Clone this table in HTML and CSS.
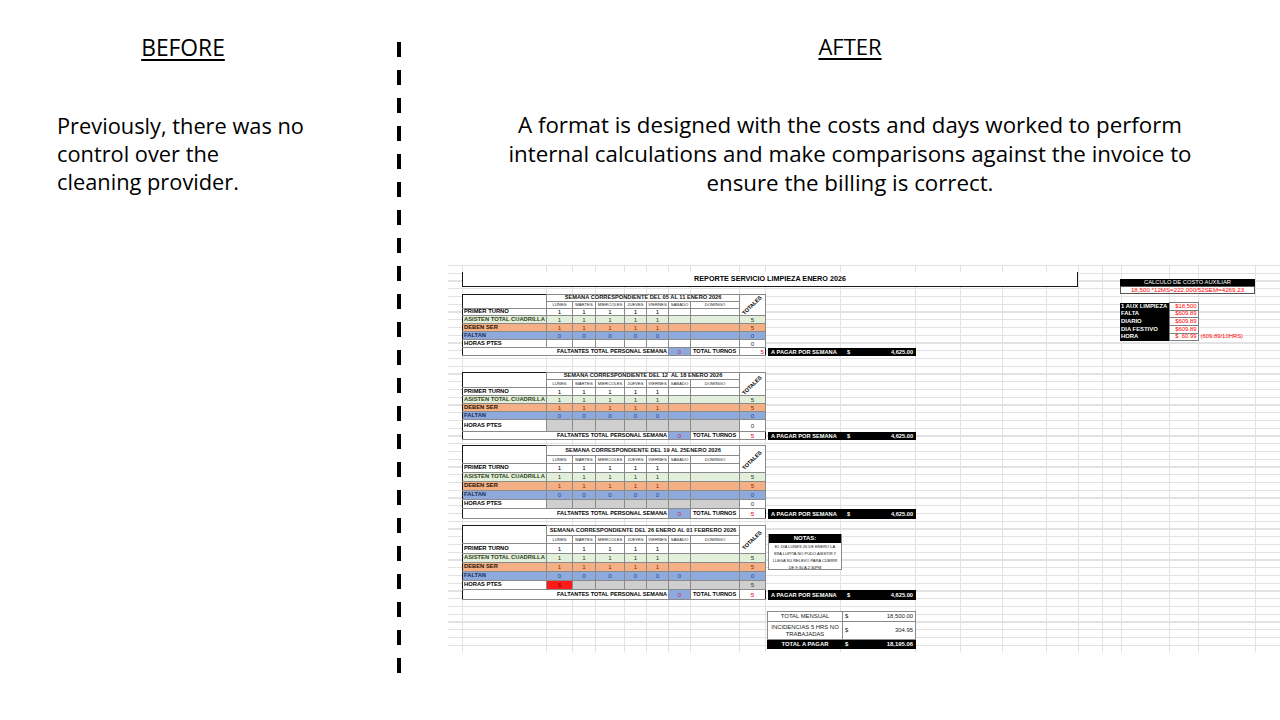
FILE: index.html
```html
<!DOCTYPE html>
<html lang="en">
<head>
<meta charset="utf-8">
<title>Before / After – Cleaning service control</title>
<link rel="stylesheet" href="styles.css">
</head>
<body>
<main class="slide">
  <section class="col-before">
    <h2 class="heading">BEFORE</h2>
    <p class="before-text">Previously, there was no<br>control over the<br>cleaning provider.</p>
  </section>
  <div class="divider"></div>
  <section class="col-after">
    <h2 class="heading">AFTER</h2>
    <p class="after-text">A format is designed with the costs and days worked to perform<br>internal calculations and make comparisons against the invoice to<br>ensure the billing is correct.</p>

    <div class="sheet">
      <div class="sheet-cols">
        <div class="sheet-main">
          <div class="report-title">REPORTE SERVICIO LIMPIEZA ENERO 2026</div>

          <!-- WEEK 1 -->
          <div class="week w1">
            <table class="wk">
              <colgroup><col class="c-lab"><col class="c-lu"><col class="c-ma"><col class="c-mi"><col class="c-ju"><col class="c-vi"><col class="c-sa"><col class="c-do"><col class="c-to"></colgroup>
              <tr class="r-head"><td rowspan="2" class="blank"></td><td colspan="7" class="wk-title">SEMANA CORRESPONDIENTE DEL 05 AL 11 ENERO 2026</td><td rowspan="3" class="tot-head"><span>TOTALES</span></td></tr>
              <tr class="r-days"><td>LUNES</td><td>MARTES</td><td>MIERCOLES</td><td>JUEVES</td><td>VIERNES</td><td>SABADO</td><td>DOMINGO</td></tr>
              <tr class="r-primer"><th>PRIMER TURNO</th><td>1</td><td>1</td><td>1</td><td>1</td><td>1</td><td></td><td></td></tr>
              <tr class="r-row r-asisten"><th>ASISTEN TOTAL CUADRILLA</th><td>1</td><td>1</td><td>1</td><td>1</td><td>1</td><td></td><td></td><td>5</td></tr>
              <tr class="r-row r-deben"><th>DEBEN SER</th><td>1</td><td>1</td><td>1</td><td>1</td><td>1</td><td></td><td></td><td>5</td></tr>
              <tr class="r-row r-faltan"><th>FALTAN</th><td>0</td><td>0</td><td>0</td><td>0</td><td>0</td><td></td><td></td><td>0</td></tr>
              <tr class="r-horas"><th>HORAS PTES</th><td></td><td></td><td></td><td></td><td></td><td></td><td></td><td class="tot-val">0</td></tr>
              <tr class="r-foot"><td colspan="6" class="foot-lab">FALTANTES TOTAL PERSONAL SEMANA</td><td class="foot-zero">0</td><td class="foot-turnos">TOTAL TURNOS</td><td class="foot-five foot-five-right">5</td></tr>
            </table>
            <div class="wk-side">
              <div class="pay"><span class="pay-lab">A PAGAR POR SEMANA</span><span>$</span><span class="pay-amt">4,625.00</span></div>
            </div>
          </div>

          <!-- WEEK 2 -->
          <div class="week w2">
            <table class="wk">
              <colgroup><col class="c-lab"><col class="c-lu"><col class="c-ma"><col class="c-mi"><col class="c-ju"><col class="c-vi"><col class="c-sa"><col class="c-do"><col class="c-to"></colgroup>
              <tr class="r-head"><td rowspan="2" class="blank"></td><td colspan="7" class="wk-title">SEMANA CORRESPONDIENTE DEL 12&nbsp; AL 18 ENERO 2026</td><td rowspan="3" class="tot-head"><span>TOTALES</span></td></tr>
              <tr class="r-days"><td>LUNES</td><td>MARTES</td><td>MIERCOLES</td><td>JUEVES</td><td>VIERNES</td><td>SABADO</td><td>DOMINGO</td></tr>
              <tr class="r-primer"><th>PRIMER TURNO</th><td>1</td><td>1</td><td>1</td><td>1</td><td>1</td><td></td><td></td></tr>
              <tr class="r-row r-asisten"><th>ASISTEN TOTAL CUADRILLA</th><td>1</td><td>1</td><td>1</td><td>1</td><td>1</td><td></td><td></td><td>5</td></tr>
              <tr class="r-row r-deben"><th>DEBEN SER</th><td>1</td><td>1</td><td>1</td><td>1</td><td>1</td><td></td><td></td><td>5</td></tr>
              <tr class="r-row r-faltan"><th>FALTAN</th><td>0</td><td>0</td><td>0</td><td>0</td><td>0</td><td></td><td></td><td>0</td></tr>
              <tr class="r-horas r-horas-gray"><th>HORAS PTES</th><td></td><td></td><td></td><td></td><td></td><td></td><td></td><td class="tot-val">0</td></tr>
              <tr class="r-foot"><td colspan="6" class="foot-lab">FALTANTES TOTAL PERSONAL SEMANA</td><td class="foot-zero">0</td><td class="foot-turnos">TOTAL TURNOS</td><td class="foot-five">5</td></tr>
            </table>
            <div class="wk-side">
              <div class="pay"><span class="pay-lab">A PAGAR POR SEMANA</span><span>$</span><span class="pay-amt">4,625.00</span></div>
            </div>
          </div>

          <!-- WEEK 3 -->
          <div class="week w3">
            <table class="wk">
              <colgroup><col class="c-lab"><col class="c-lu"><col class="c-ma"><col class="c-mi"><col class="c-ju"><col class="c-vi"><col class="c-sa"><col class="c-do"><col class="c-to"></colgroup>
              <tr class="r-head"><td rowspan="2" class="blank"></td><td colspan="7" class="wk-title">SEMANA CORRESPONDIENTE DEL 19 AL 25ENERO 2026</td><td rowspan="3" class="tot-head"><span>TOTALES</span></td></tr>
              <tr class="r-days"><td>LUNES</td><td>MARTES</td><td>MIERCOLES</td><td>JUEVES</td><td>VIERNES</td><td>SABADO</td><td>DOMINGO</td></tr>
              <tr class="r-primer"><th>PRIMER TURNO</th><td>1</td><td>1</td><td>1</td><td>1</td><td>1</td><td></td><td></td></tr>
              <tr class="r-row r-asisten"><th>ASISTEN TOTAL CUADRILLA</th><td>1</td><td>1</td><td>1</td><td>1</td><td>1</td><td></td><td></td><td>5</td></tr>
              <tr class="r-row r-deben"><th>DEBEN SER</th><td>1</td><td>1</td><td>1</td><td>1</td><td>1</td><td></td><td></td><td>5</td></tr>
              <tr class="r-row r-faltan"><th>FALTAN</th><td>0</td><td>0</td><td>0</td><td>0</td><td>0</td><td></td><td></td><td>0</td></tr>
              <tr class="r-horas r-horas-gray"><th>HORAS PTES</th><td></td><td></td><td></td><td></td><td></td><td></td><td></td><td class="tot-val">0</td></tr>
              <tr class="r-foot"><td colspan="6" class="foot-lab">FALTANTES TOTAL PERSONAL SEMANA</td><td class="foot-zero">0</td><td class="foot-turnos">TOTAL TURNOS</td><td class="foot-five">5</td></tr>
            </table>
            <div class="wk-side">
              <div class="pay"><span class="pay-lab">A PAGAR POR SEMANA</span><span>$</span><span class="pay-amt">4,625.00</span></div>
            </div>
          </div>

          <!-- WEEK 4 -->
          <div class="week w4">
            <table class="wk">
              <colgroup><col class="c-lab"><col class="c-lu"><col class="c-ma"><col class="c-mi"><col class="c-ju"><col class="c-vi"><col class="c-sa"><col class="c-do"><col class="c-to"></colgroup>
              <tr class="r-head"><td rowspan="2" class="blank"></td><td colspan="7" class="wk-title">SEMANA CORRESPONDIENTE DEL 26 ENERO AL 01 FEBRERO 2026</td><td rowspan="3" class="tot-head"><span>TOTALES</span></td></tr>
              <tr class="r-days"><td>LUNES</td><td>MARTES</td><td>MIERCOLES</td><td>JUEVES</td><td>VIERNES</td><td>SABADO</td><td>DOMINGO</td></tr>
              <tr class="r-primer"><th>PRIMER TURNO</th><td>1</td><td>1</td><td>1</td><td>1</td><td>1</td><td></td><td></td></tr>
              <tr class="r-row r-asisten"><th>ASISTEN TOTAL CUADRILLA</th><td>1</td><td>1</td><td>1</td><td>1</td><td>1</td><td></td><td></td><td>5</td></tr>
              <tr class="r-row r-deben"><th>DEBEN SER</th><td>1</td><td>1</td><td>1</td><td>1</td><td>1</td><td></td><td></td><td>5</td></tr>
              <tr class="r-row r-faltan"><th>FALTAN</th><td>0</td><td>0</td><td>0</td><td>0</td><td>0</td><td>0</td><td></td><td>0</td></tr>
              <tr class="r-horas r-horas-gray"><th>HORAS PTES</th><td class="alert">5</td><td></td><td></td><td></td><td></td><td></td><td></td><td class="tot-gray">5</td></tr>
              <tr class="r-foot"><td colspan="6" class="foot-lab">FALTANTES TOTAL PERSONAL SEMANA</td><td class="foot-zero">0</td><td class="foot-turnos">TOTAL TURNOS</td><td class="foot-five">5</td></tr>
            </table>
            <div class="wk-side">
              <div class="notes">
                <div class="notes-head">NOTAS:</div>
                <div class="notes-body">EL DIA LUNES 26 DE ENERO LA<br>SRA LUPITA NO PUDO ASISTIR Y<br>LLEGA SU RELEVO PARA CUBRIR<br>DE 9:30 A 2:30PM</div>
              </div>
              <div class="pay"><span class="pay-lab">A PAGAR POR SEMANA</span><span>$</span><span class="pay-amt">4,625.00</span></div>
            </div>
          </div>

          <table class="totals">
            <colgroup><col class="tc-lab"><col class="tc-cur"><col class="tc-amt"></colgroup>
            <tr class="t-r1"><td class="t-lab">TOTAL MENSUAL</td><td class="t-cur">$</td><td class="t-amt">18,500.00</td></tr>
            <tr class="t-r2"><td class="t-lab">INCIDENCIAS 5 HRS NO<br>TRABAJADAS</td><td class="t-cur">$</td><td class="t-amt">304.95</td></tr>
            <tr class="t-r3 t-dark"><td class="t-lab">TOTAL A PAGAR</td><td class="t-cur">$</td><td class="t-amt">18,195.06</td></tr>
          </table>
        </div>

        <aside class="calc">
          <div class="calc-head">CALCULO DE COSTO AUXILIAR</div>
          <div class="calc-formula">18,500 *12MS=222,000/52SEM=4269.23</div>
          <table class="rates">
            <tr class="rt-a"><th>1 AUX LIMPIEZA</th><td class="rate-val">$18,500</td><td class="rate-note"></td></tr>
            <tr class="rt-b"><th>FALTA</th><td class="rate-val">$609.89</td><td class="rate-note"></td></tr>
            <tr class="rt-a"><th>DIARIO</th><td class="rate-val">$609.89</td><td class="rate-note"></td></tr>
            <tr class="rt-a"><th>DIA FESTIVO</th><td class="rate-val">$609.89</td><td class="rate-note"></td></tr>
            <tr class="rt-b"><th>HORA</th><td class="rate-val">$&nbsp; 60.99</td><td class="rate-note">(609.89/10HRS)</td></tr>
          </table>
        </aside>
      </div>
    </div>
  </section>
</main>
</body>
</html>
```

FILE: styles.css
```css
* { box-sizing: border-box; }

html, body { margin: 0; padding: 0; }

body {
  width: 1280px;
  height: 720px;
  overflow: hidden;
  background: #fff;
  color: #000;
  font-family: "Open Sans", "Liberation Sans", sans-serif;
}

.slide {
  display: flex;
  height: 720px;
}

/* ---------- BEFORE column ---------- */
.col-before {
  flex: none;
  width: 397px;
  padding: 33px 0 0 57px;
}

.heading {
  margin: 0;
  font-size: 22px;
  font-weight: 400;
  line-height: 30px;
  text-align: center;
  text-decoration: underline;
  text-decoration-thickness: 1.5px;
  text-underline-offset: 3px;
}

.col-before .heading {
  width: 252px;
  font-size: 22.8px;
}

.before-text {
  margin: 49px 0 0;
  font-size: 21.8px;
  line-height: 27.8px;
}

/* ---------- dashed divider ---------- */
.divider {
  flex: none;
  width: 4px;
  height: 631px;
  margin-top: 42px;
  background: repeating-linear-gradient(to bottom, #000 0 15px, transparent 15px 28px);
}

/* ---------- AFTER column ---------- */
.col-after {
  flex: 1;
  min-width: 0;
  padding: 31px 0 0 19px;
}

.after-text {
  margin: 49px 0 0;
  font-size: 22.3px;
  line-height: 29px;
  text-align: center;
  white-space: nowrap;
}

/* ---------- spreadsheet picture ---------- */
.sheet {
  --grid: #e2e2e2;
  margin: 68px 0 0 28px;
  width: 832px;
  height: 387px;
  overflow: hidden;
  background-color: #fff;
  background-image: repeating-linear-gradient(to bottom, var(--grid) 0 1px, transparent 1px 7.75px);
  font-family: "Liberation Sans", Arial, sans-serif;
  color: #000;
}

.sheet-cols {
  --vl: linear-gradient(var(--grid), var(--grid));
  display: flex;
  align-items: flex-start;
  height: 100%;
  padding: 7px 0 0 14px;
  background-image: var(--vl), var(--vl), var(--vl), var(--vl), var(--vl), var(--vl), var(--vl), var(--vl), var(--vl), var(--vl), var(--vl), var(--vl), var(--vl), var(--vl), var(--vl), var(--vl), var(--vl), var(--vl), var(--vl), var(--vl), var(--vl);
  background-size: 1px 100%;
  background-repeat: no-repeat;
  background-position: 14px 0, 98px 0, 124px 0, 147px 0, 176px 0, 198px 0, 220px 0, 242px 0, 291px 0, 317px 0, 392px 0, 467px 0, 512px 0, 554px 0, 598px 0, 630px 0, 654px 0, 673px 0, 721px 0, 750px 0, 807px 0;
}

.sheet-main {
  flex: none;
  width: 616px;
}

.report-title {
  height: 15px;
  border: 1.5px solid #1a1a1a;
  border-top: none;
  background: #fff;
  font-size: 7.2px;
  font-weight: 700;
  line-height: 13px;
  text-align: center;
}

/* week blocks */
.week { display: flex; }
.w1 { margin-top: 7px;  --hh: 7px;  --hd: 7px; --hp: 7px;  --hr: 8px; --hx: 8px;  --hf: 8px; }
.w2 { margin-top: 16px; --hh: 7px;  --hd: 8px; --hp: 8px;  --hr: 8px; --hx: 12px; --hf: 8px; }
.w3 { margin-top: 5px;  --hh: 10px; --hd: 8px; --hp: 9px;  --hr: 9px; --hx: 9px;  --hf: 10px; }
.w4 { margin-top: 6px;  --hh: 10px; --hd: 8px; --hp: 10px; --hr: 9px; --hx: 9px;  --hf: 10px; }

.wk {
  flex: none;
  width: 303px;
  border-collapse: collapse;
  table-layout: fixed;
  border: 1.5px solid #1a1a1a;
  background: #fff;
}

.c-lab { width: 84px; }
.c-lu  { width: 26px; }
.c-ma  { width: 23px; }
.c-mi  { width: 29px; }
.c-ju  { width: 22px; }
.c-vi  { width: 22px; }
.c-sa  { width: 22px; }
.c-do  { width: 49px; }
.c-to  { width: 26px; }

.wk td, .wk th {
  padding: 0;
  border: 1px solid #8a8a8a;
  font-size: 6.2px;
  font-weight: 400;
  line-height: 1;
  text-align: center;
  white-space: nowrap;
  overflow: hidden;
}

.wk th {
  text-align: left;
  font-size: 5.8px;
  font-weight: 700;
  padding-left: 1px;
  border-left: none;
}

.r-head { height: var(--hh); }
.r-days { height: var(--hd); }
.r-primer { height: var(--hp); }
.r-row { height: var(--hr); }
.r-horas { height: var(--hx); }
.r-foot { height: var(--hf); }

.wk .blank { border-top: none; border-left: none; border-bottom: none; }

.wk .wk-title {
  font-size: 5.7px;
  font-weight: 700;
  color: #111;
}

.r-days td {
  font-size: 4.2px;
  color: #222;
}

.wk .tot-head {
  overflow: visible;
  vertical-align: middle;
}

.tot-head span {
  display: inline-block;
  margin-top: 2px;
  transform: rotate(-45deg);
  font-size: 5.4px;
  font-weight: 700;
}

.r-asisten td, .r-asisten th { background: #e2efda; color: #2f3f22; }
.r-deben td, .r-deben th { background: #f4b084; color: #8a2d06; }
.r-deben th { color: #2a1406; }
.r-faltan td, .r-faltan th { background: #8ea9db; color: #1f4e79; }
.r-faltan th { color: #1f2d5a; }

.r-horas .tot-val { color: #333; }
.r-horas-gray td { background: #cfcfcf; }
.r-horas-gray td.tot-val { background: #fff; }
.r-horas-gray td.tot-gray { background: #cfcfcf; color: #333; }
.r-horas-gray td.alert { background: #ff1a1a; color: #6e0000; }

.r-foot td { border-left: none; border-right: none; font-weight: 700; font-size: 5.6px; }
.wk .foot-lab { text-align: right; padding-right: 1px; border-right: 1px solid #8a8a8a; }
.wk .foot-zero { background: #8ea9db; color: #d0206a; border-right: 1px solid #8a8a8a; font-weight: 400; font-size: 6px; }
.wk .foot-turnos { text-align: left; padding-left: 2px; border-right: 1px solid #8a8a8a; }
.wk .foot-five { color: #e00000; font-weight: 400; font-size: 6.2px; }
.wk .foot-five-right { text-align: right; padding-right: 1px; }

/* side of each week */
.wk-side {
  flex: none;
  width: 148px;
  margin-left: 2px;
  display: flex;
  flex-direction: column;
}

.pay {
  margin-top: auto;
  height: var(--hf);
  display: flex;
  align-items: center;
  padding: 0 3px;
  background: #000;
  color: #fff;
  font-size: 5.7px;
  font-weight: 700;
  white-space: nowrap;
}

.pay-lab { width: 76px; }
.pay-amt { margin-left: auto; }

.notes {
  width: 74px;
  margin-top: 9px;
  border: 1px solid #8a8a8a;
  border-top: none;
  background: #fff;
}

.notes-head {
  height: 9px;
  background: #000;
  color: #fff;
  font-size: 6px;
  font-weight: 700;
  line-height: 9px;
  text-align: center;
}

.notes-body {
  height: 26px;
  overflow: hidden;
  font-size: 4px;
  line-height: 7px;
  text-align: center;
  white-space: nowrap;
  color: #111;
}

/* monthly totals */
.totals {
  margin: 11px 0 0 305px;
  width: 148px;
  border-collapse: collapse;
  table-layout: fixed;
  border: 1px solid #333;
  background: #fff;
}

.tc-lab { width: 75px; }
.tc-cur { width: 12px; }
.tc-amt { width: 61px; }

.totals td {
  padding: 0;
  border: 1px solid #8a8a8a;
  font-size: 5.9px;
  line-height: 7px;
  color: #222;
  white-space: nowrap;
}

.t-r1 { height: 10px; }
.t-r2 { height: 18px; }
.t-r3 { height: 9px; }

.totals .t-lab { text-align: center; }
.totals .t-cur { border-right: none; padding-left: 2px; }
.totals .t-amt { border-left: none; text-align: right; padding-right: 2px; }
.totals .t-dark td { background: #000; color: #fff; font-weight: 700; border-color: #000; }

/* cost calculation block */
.calc {
  flex: none;
  width: 135px;
  margin: 7px 0 0 42px;
}

.calc-head {
  height: 7px;
  background: #000;
  color: #fff;
  font-size: 5.8px;
  line-height: 7px;
  text-align: center;
  white-space: nowrap;
}

.calc-formula {
  height: 8px;
  border: 1px solid #555;
  background: #fff;
  color: #ff0000;
  font-size: 6.2px;
  line-height: 6px;
  text-align: center;
  white-space: nowrap;
}

.rates {
  margin-top: 8px;
  border-collapse: collapse;
}

.rt-a { height: 8px; }
.rt-b { height: 7px; }

.rates th {
  width: 49px;
  padding: 0 0 0 1px;
  background: #000;
  color: #fff;
  font-size: 5.9px;
  font-weight: 700;
  line-height: 1;
  text-align: left;
  white-space: nowrap;
}

.rates .rate-val {
  width: 29px;
  padding: 0 1px 0 0;
  border: 1px solid #7f7f7f;
  background: #fff;
  color: #ff0000;
  font-size: 5.9px;
  line-height: 1;
  text-align: right;
  white-space: nowrap;
}

.rates .rate-note {
  padding: 0 0 0 2px;
  color: #ff0000;
  font-size: 5.9px;
  line-height: 1;
  white-space: nowrap;
}
```
